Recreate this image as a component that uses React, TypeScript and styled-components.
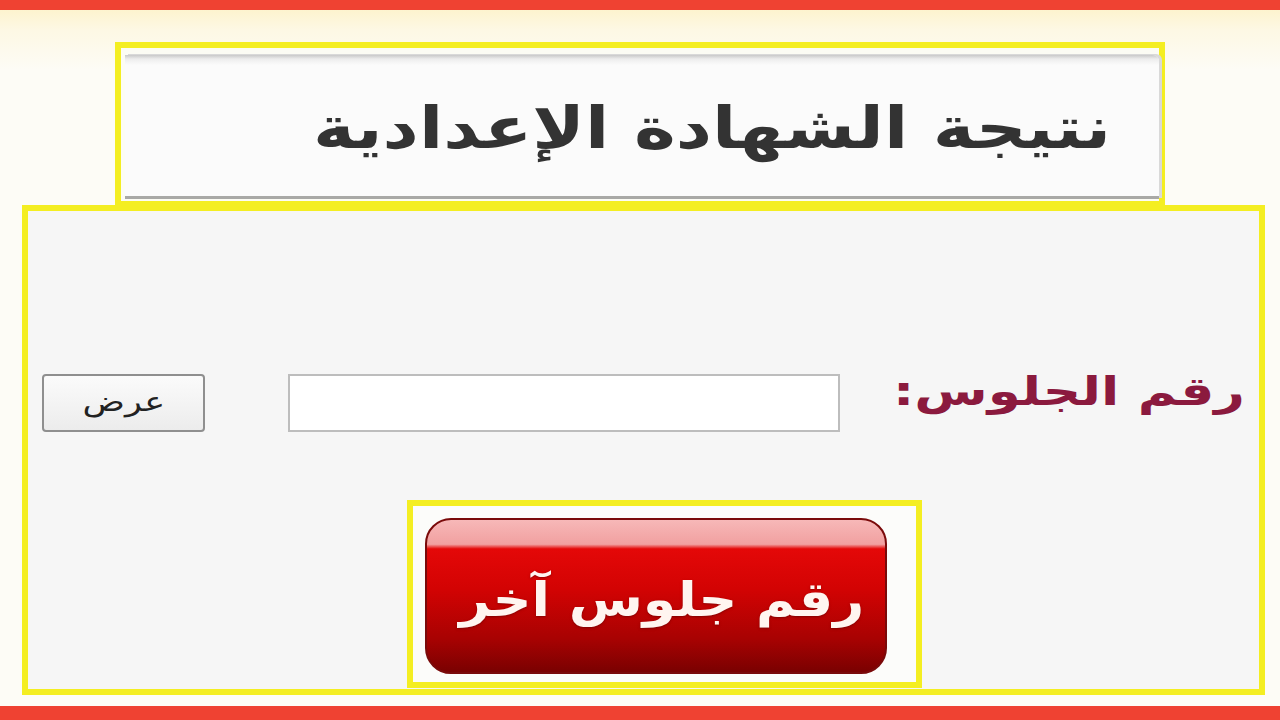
import React, { useState } from 'react';
import styled, { createGlobalStyle } from 'styled-components';

const GlobalStyle = createGlobalStyle`
  html, body {
    margin: 0;
    padding: 0;
    width: 1280px;
    height: 720px;
    overflow: hidden;
    font-family: "DejaVu Sans", "Noto Sans", sans-serif;
  }
`;

const yellow = '#f4ee22';

const Page = styled.div`
  width: 1280px;
  height: 720px;
  display: flex;
  flex-direction: column;
  background: linear-gradient(#fdf1c4 0px, #fdf8e4 30px, #fdfcf6 70px, #fdfcf6 100%);
`;

const RedBar = styled.div<{ $h: number }>`
  height: ${(p) => p.$h}px;
  background: #ef4232;
  flex-shrink: 0;
`;

const Body = styled.div`
  flex: 1;
  display: flex;
  flex-direction: column;
  padding-top: 32px;
`;

const HeaderFrame = styled.div`
  margin-left: 115px;
  width: 1050px;
  height: 163px;
  box-sizing: border-box;
  border: 6px solid ${yellow};
  border-bottom-width: 4px;
  padding: 7px 0 2px 4px;
  background: #fcfcf4;
`;

const HeaderPanel = styled.div`
  height: 100%;
  box-sizing: border-box;
  background: linear-gradient(#c9c9c9 0px, #ededed 4px, #fbfbfb 10px, #fbfbfb 100%);
  border-top-right-radius: 6px;
  border-bottom: 3px solid #a9a9a6;
  display: flex;
  align-items: center;
  justify-content: flex-start;
  padding-right: 48px;
  direction: rtl;
  box-shadow: 3px -1px 0 #d9d9d9;
`;

/* the source font is a wide kufi face; DejaVu is stretched to the same width */
const Stretched = styled.span<{ $sx: number }>`
  display: inline-block;
  white-space: nowrap;
  transform: scaleX(${(p) => p.$sx});
  transform-origin: center;
`;

const Title = styled.h1`
  margin: 4px 0 0;
  font-size: 58px;
  font-weight: bold;
  color: #333;
  transform-origin: right center;
  transform: scaleX(1.22);
`;

const MainFrame = styled.div`
  margin-left: 22px;
  width: 1243px;
  height: 490px;
  box-sizing: border-box;
  border: 6px solid ${yellow};
  background: #f6f6f6;
  display: flex;
  flex-direction: column;
  padding-top: 163px;
`;

const FormRow = styled.div`
  direction: rtl;
  display: flex;
  align-items: center;
  height: 58px;
  padding-right: 14px;
`;

const Label = styled.label`
  font-size: 40px;
  font-weight: bold;
  color: #8b1a3e;
  width: 345px;
  margin-left: 60px;
  white-space: nowrap;
  text-align: right;
  margin-top: -24px;
  transform-origin: right center;
  transform: scaleX(1.33);
`;

const Input = styled.input`
  width: 552px;
  height: 58px;
  box-sizing: border-box;
  border: 2px solid #bdbdbd;
  background: #fff;
  margin-left: 83px;
  font-size: 22px;
  outline: none;
`;

const ShowButton = styled.button`
  width: 163px;
  height: 58px;
  box-sizing: border-box;
  border: 2px solid #8f8f8f;
  border-radius: 4px;
  background: linear-gradient(#fbfbfb, #ececec);
  font-family: "DejaVu Sans", sans-serif;
  font-size: 27px;
  color: #222;
  cursor: pointer;
  padding: 0 0 4px;
`;

const AgainFrame = styled.div`
  margin-top: 68px;
  margin-left: 379px;
  width: 515px;
  height: 188px;
  box-sizing: border-box;
  border: 6px solid ${yellow};
  background: #fcfcfa;
  padding: 12px 29px 8px 12px;
`;

const AgainButton = styled.button`
  width: 100%;
  height: 100%;
  border: 2px solid #7a0a0a;
  border-radius: 26px;
  background: linear-gradient(
    #f7b8b8 0%,
    #f1a0a0 16%,
    #e40808 19%,
    #d30303 45%,
    #a80202 78%,
    #7a0101 100%
  );
  color: #fff5f0;
  font-family: "DejaVu Sans", sans-serif;
  font-weight: bold;
  font-size: 48px;
  direction: rtl;
  padding: 6px 0 0 12px;
  text-shadow: 0 1px 2px rgba(80, 0, 0, 0.5);
  cursor: pointer;
`;

export default function App() {
  const [seat, setSeat] = useState('');
  return (
    <Page>
      <GlobalStyle />
      <RedBar $h={10} />
      <Body>
        <HeaderFrame>
          <HeaderPanel>
            <Title>نتيجة الشهادة الإعدادية</Title>
          </HeaderPanel>
        </HeaderFrame>
        <MainFrame>
          <FormRow>
            <Label htmlFor="seat">رقم الجلوس:</Label>
            <Input id="seat" value={seat} onChange={(e) => setSeat(e.target.value)} />
            <ShowButton>
              <Stretched $sx={1.3}>عرض</Stretched>
            </ShowButton>
          </FormRow>
          <AgainFrame>
            <AgainButton onClick={() => setSeat('')}>
              <Stretched $sx={1.12}>رقم جلوس آخر</Stretched>
            </AgainButton>
          </AgainFrame>
        </MainFrame>
      </Body>
      <RedBar $h={14} />
    </Page>
  );
}
